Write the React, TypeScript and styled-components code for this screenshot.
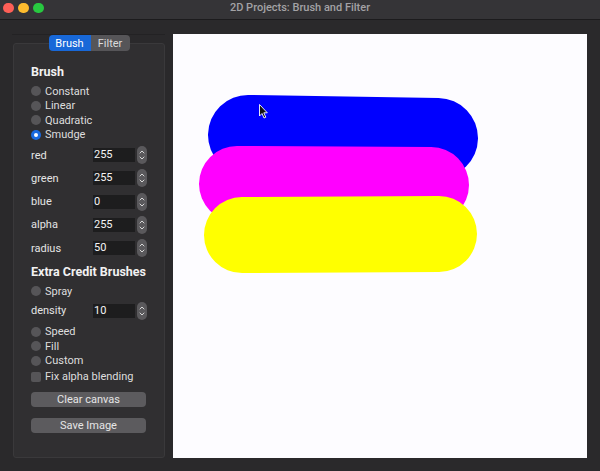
import React from "react";
import styled, { createGlobalStyle } from "styled-components";

const Global = createGlobalStyle`
  html, body { margin: 0; padding: 0; background: #2a292b; }
  body { font-family: "Roboto", "Liberation Sans", sans-serif; -webkit-font-smoothing: antialiased; }
  * { box-sizing: border-box; }
`;

const Window = styled.div`
  width: 600px;
  height: 471px;
  background: #2a292b;
  display: flex;
  flex-direction: column;
  overflow: hidden;
`;

const TitleBar = styled.div`
  height: 20px;
  flex: none;
  background: #353437;
  border-bottom: 1px solid #1c1b1d;
  display: flex;
  align-items: center;
  position: relative;
  padding-left: 3px;
`;

const Lights = styled.div`
  display: flex;
  gap: 4.5px;
  margin-top: -3px;
`;

const Light = styled.span<{ $c: string }>`
  width: 10.5px;
  height: 10.5px;
  border-radius: 50%;
  background: ${(p) => p.$c};
`;

const Title = styled.div`
  position: absolute;
  left: 0;
  right: 0;
  top: 1px;
  text-align: center;
  font-size: 11px;
  font-weight: 500;
  color: #a3a2a5;
  line-height: 14px;
`;

const Body = styled.div`
  flex: 1;
  display: flex;
  padding: 14px 0 0 12px;
  gap: 8px;
`;

const Sidebar = styled.div`
  width: 153px;
  height: 424px;
  display: flex;
  flex-direction: column;
  border-top: 1px solid #232224;
`;

const Tabs = styled.div`
  display: flex;
  justify-content: center;
  position: relative;
  z-index: 1;
  margin-left: 1px;
`;

const Tab = styled.div<{ $active?: boolean; $w: number }>`
  width: ${(p) => p.$w}px;
  height: 16px;
  display: flex;
  align-items: center;
  justify-content: center;
  font-size: 11px;
  color: ${(p) => (p.$active ? "#ffffff" : "#dcdcdc")};
  background: ${(p) => (p.$active ? "#1868d8" : "#565558")};
  border-radius: ${(p) => (p.$active ? "4px 0 0 4px" : "0 4px 4px 0")};
`;

const Panel = styled.div`
  flex: 1;
  margin: -8px 0 0 1px;
  background: #302f31;
  border: 1px solid #3a393b;
  border-radius: 3px;
  padding: 19px 0 0 17px;
  display: flex;
  flex-direction: column;
`;

const Heading = styled.div<{ $mt?: number }>`
  font-size: 12.5px;
  font-weight: 700;
  color: #f2f2f2;
  line-height: 18px;
  height: 18px;
  margin-top: ${(p) => p.$mt ?? 0}px;
  margin-bottom: 3px;
`;

const OptionRow = styled.div<{ $mt?: number }>`
  height: 14.5px;
  display: flex;
  align-items: center;
  gap: 4px;
  font-size: 11px;
  color: #dedede;
  margin-top: ${(p) => p.$mt ?? 0}px;
`;

const Radio = styled.span<{ $on?: boolean }>`
  width: 10px;
  height: 10px;
  border-radius: 50%;
  flex: none;
  background: ${(p) => (p.$on ? "#1a6ae0" : "#565558")};
  display: flex;
  align-items: center;
  justify-content: center;
  &::after {
    content: "";
    display: ${(p) => (p.$on ? "block" : "none")};
    width: 4px;
    height: 4px;
    border-radius: 50%;
    background: #fff;
  }
`;

const Check = styled.span`
  width: 10px;
  height: 10px;
  border-radius: 2px;
  flex: none;
  background: #565558;
`;

const FieldRow = styled.div<{ $mt?: number }>`
  height: 23.25px;
  display: flex;
  align-items: center;
  margin-top: ${(p) => p.$mt ?? 0}px;
`;

const FieldLabel = styled.span`
  width: 62px;
  font-size: 11px;
  color: #e4e4e4;
`;

const Input = styled.div`
  width: 42px;
  height: 14px;
  background: #1d1d1e;
  color: #f4f4f4;
  font-size: 11px;
  line-height: 14px;
  padding-left: 1px;
`;

const Spinner = styled.div`
  width: 10px;
  height: 18px;
  margin-left: 2px;
  border-radius: 5px;
  background: #5a595c;
  display: flex;
  align-items: center;
  justify-content: center;
`;

const Button = styled.div<{ $mt: number }>`
  width: 115px;
  height: 15px;
  margin-top: ${(p) => p.$mt}px;
  border-radius: 4px;
  background: #5c5b5e;
  color: #e6e6e6;
  font-size: 11px;
  display: flex;
  align-items: center;
  justify-content: center;
`;

const Canvas = styled.div`
  width: 414px;
  height: 424px;
  background: #fdfcff;
  position: relative;
`;

const Drawing = styled.svg`
  display: block;
`;

const Field = ({ label, value, mt }: { label: string; value: string; mt?: number }) => (
  <FieldRow $mt={mt}>
    <FieldLabel>{label}</FieldLabel>
    <Input>{value}</Input>
    <Spinner>
      <svg width="6" height="12" viewBox="0 0 6 12" fill="none" stroke="#d8d8d8" strokeWidth="1" strokeLinecap="round" strokeLinejoin="round">
        <path d="M1 4 L3 2 L5 4" />
        <path d="M1 8 L3 10 L5 8" />
      </svg>
    </Spinner>
  </FieldRow>
);

const Option = ({ label, on, mt }: { label: string; on?: boolean; mt?: number }) => (
  <OptionRow $mt={mt}>
    <Radio $on={on} />
    {label}
  </OptionRow>
);

export default function App() {
  return (
    <>
      <Global />
      <Window>
        <TitleBar>
          <Lights>
            <Light $c="#fe5f57" />
            <Light $c="#febc2e" />
            <Light $c="#28c840" />
          </Lights>
          <Title>2D Projects: Brush and Filter</Title>
        </TitleBar>
        <Body>
          <Sidebar>
            <Tabs>
              <Tab $active $w={42}>Brush</Tab>
              <Tab $w={39}>Filter</Tab>
            </Tabs>
            <Panel>
              <Heading>Brush</Heading>
              <Option label="Constant" />
              <Option label="Linear" />
              <Option label="Quadratic" />
              <Option label="Smudge" on />
              <Field label="red" value="255" mt={1.5} />
              <Field label="green" value="255" />
              <Field label="blue" value="0" />
              <Field label="alpha" value="255" />
              <Field label="radius" value="50" />
              <Heading $mt={3}>Extra Credit Brushes</Heading>
              <Option label="Spray" />
              <Field label="density" value="10" mt={1} />
              <Option label="Speed" mt={2} />
              <Option label="Fill" />
              <Option label="Custom" />
              <OptionRow $mt={1.5}>
                <Check />
                Fix alpha blending
              </OptionRow>
              <Button $mt={8}>Clear canvas</Button>
              <Button $mt={11}>Save Image</Button>
            </Panel>
          </Sidebar>
          <Canvas>
            <Drawing width="414" height="424" viewBox="173 35 414 424">
              <path d="M248 136 L438 139" stroke="#0000ff" strokeWidth="80" strokeLinecap="round" fill="none" />
              <path d="M237 185 L431 186" stroke="#ff00ff" strokeWidth="76" strokeLinecap="round" fill="none" />
              <path d="M242 236 L439 235" stroke="#ffff00" strokeWidth="76" strokeLinecap="round" fill="none" />
              <path d="M259.5 105.5 L259.5 117 L262 114.5 L264 119 L265.8 118.2 L263.8 113.8 L267.3 113.8 Z" fill="#111" stroke="#fff" strokeWidth="0.9" strokeLinejoin="round" />
            </Drawing>
          </Canvas>
        </Body>
      </Window>
    </>
  );
}
